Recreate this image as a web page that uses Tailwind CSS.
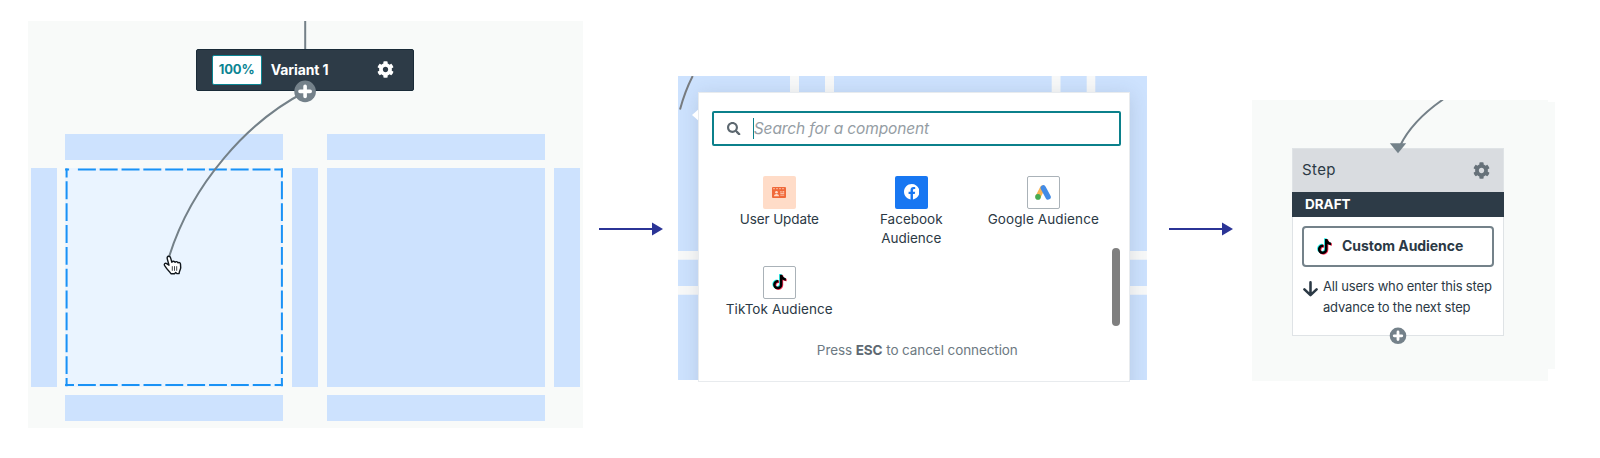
<!DOCTYPE html>
<html lang="en">
<head>
<meta charset="utf-8">
<title>Connect a component</title>
<script src="https://cdn.jsdelivr.net/npm/@tailwindcss/browser@4"></script>
</head>
<body class="bg-white font-['Inter',sans-serif] text-[#2b3945]">
<svg class="hidden">
  <symbol id="cog" viewBox="0 0 512 512"><path fill="currentColor" d="M487.4 315.7l-42.6-24.6c4.3-23.2 4.3-47 0-70.2l42.6-24.6c4.9-2.8 7.1-8.6 5.5-14-11.1-35.6-30-67.8-54.7-94.6-3.8-4.1-10-5.1-14.8-2.3L380.8 110c-17.9-15.4-38.5-27.3-60.8-35.1V25.8c0-5.6-3.9-10.5-9.4-11.7-36.7-8.2-74.3-7.8-109.2 0-5.5 1.2-9.4 6.1-9.4 11.7V75c-22.2 7.9-42.8 19.8-60.8 35.1L88.7 85.5c-4.9-2.8-11-1.9-14.8 2.3-24.7 26.7-43.6 58.9-54.7 94.6-1.7 5.4.6 11.2 5.5 14L67.3 221c-4.3 23.2-4.3 47 0 70.2l-42.6 24.6c-4.9 2.8-7.1 8.6-5.5 14 11.1 35.6 30 67.8 54.7 94.6 3.8 4.1 10 5.1 14.8 2.3l42.6-24.6c17.9 15.4 38.5 27.3 60.8 35.1v49.2c0 5.6 3.9 10.5 9.4 11.7 36.7 8.2 74.3 7.8 109.2 0 5.5-1.2 9.4-6.1 9.4-11.7v-49.2c22.2-7.9 42.8-19.8 60.8-35.1l42.6 24.6c4.9 2.8 11 1.9 14.8-2.3 24.7-26.7 43.6-58.9 54.7-94.6 1.5-5.5-.7-11.3-5.6-14.1zM256 336c-44.1 0-80-35.9-80-80s35.9-80 80-80 80 35.9 80 80-35.9 80-80 80z"/></symbol>
  <symbol id="note" viewBox="-30 -24 508 560">
    <path fill="#25f4ee" transform="translate(-28 -20)" d="M448,209.91a210.06,210.06,0,0,1-122.77-39.25V349.38A162.55,162.55,0,1,1,185,188.31V278.2a74.62,74.62,0,1,0,52.23,71.18V0l88,0a121.18,121.18,0,0,0,1.86,22.17h0A122.18,122.18,0,0,0,381,102.39a121.43,121.43,0,0,0,67,20.14Z"/>
    <path fill="#fe2c55" transform="translate(28 20)" d="M448,209.91a210.06,210.06,0,0,1-122.77-39.25V349.38A162.55,162.55,0,1,1,185,188.31V278.2a74.62,74.62,0,1,0,52.23,71.18V0l88,0a121.18,121.18,0,0,0,1.86,22.17h0A122.18,122.18,0,0,0,381,102.39a121.43,121.43,0,0,0,67,20.14Z"/>
    <path fill="#000" d="M448,209.91a210.06,210.06,0,0,1-122.77-39.25V349.38A162.55,162.55,0,1,1,185,188.31V278.2a74.62,74.62,0,1,0,52.23,71.18V0l88,0a121.18,121.18,0,0,0,1.86,22.17h0A122.18,122.18,0,0,0,381,102.39a121.43,121.43,0,0,0,67,20.14Z"/>
  </symbol>
  <symbol id="arrow" viewBox="0 0 64 14"><path d="M0 6.9H55" stroke="#2b3496" stroke-width="2"/><path d="M53 .5L64 7L53 13.5z" fill="#2b3496"/></symbol>
</svg>

<main class="flex h-[458px] w-[1600px] items-start overflow-hidden">

  <!-- Canvas with drop zones -->
  <section class="relative mt-[21px] ml-7 h-[406.5px] w-[555px] shrink-0 bg-[#f8faf9]">
    <div class="pt-[27.7px] pl-[168px]">
      <div class="flex h-[42.3px] w-[218px] items-center rounded-[2px] border border-[#1a2b38] bg-[#2d3b47] pr-[19px] pl-[14.7px]">
        <div class="flex h-[30px] w-[50px] items-center justify-center rounded-[2px] border border-[#0b8593] bg-white text-[13px] font-bold tracking-[-0.1px] text-[#0b8593]">100%</div>
        <span class="ml-[9px] text-[14px] font-bold tracking-[-0.1px] text-white">Variant 1</span>
        <svg class="ml-auto size-[17px] text-white"><use href="#cog"/></svg>
      </div>
    </div>
    <div class="ml-[2.5px] grid grid-cols-[26.3px_218px_26.3px_218px_26.3px] grid-rows-[25.7px_218.3px_26px] gap-[8.7px] pt-[43px]">
      <div class="col-start-2 bg-[#cde2fe]"></div>
      <div class="col-start-4 bg-[#cde2fe]"></div>
      <div class="col-start-1 row-start-2 bg-[#cde2fe]"></div>
      <div class="col-start-2 row-start-2 bg-[#eaf4ff]">
        <svg class="block h-full w-full" viewBox="0 0 218 218.5" fill="none" stroke="#1a92f5" stroke-width="2">
          <path d="M0 1.5H218" stroke-dasharray="4 8.8 18 3.8 18 3.9 18 3.8 18 3.9 18 3.8 18 3.9 18 3.8 18 3.9 18 3.8 9 99"/>
          <path d="M0 217.3H218" stroke-dasharray="17.9 3.97" stroke-dashoffset="9"/>
          <path d="M1.5 .5V218.5M217 .5V218.5" stroke-dasharray="17.9 3.97" stroke-dashoffset="9"/>
        </svg>
      </div>
      <div class="col-start-3 row-start-2 bg-[#cde2fe]"></div>
      <div class="col-start-4 row-start-2 bg-[#cde2fe]"></div>
      <div class="col-start-5 row-start-2 bg-[#cde2fe]"></div>
      <div class="col-start-2 row-start-3 bg-[#cde2fe]"></div>
      <div class="col-start-4 row-start-3 bg-[#cde2fe]"></div>
    </div>
    <!-- Connector, handle and pointer -->
    <svg class="absolute inset-0 h-full w-full" viewBox="28 21 555 406.5" fill="none">
      <path d="M305.2 21V49M305 92C248 121 192 184 169.3 256" stroke="#748088" stroke-width="2"/>
      <circle cx="305.1" cy="91.4" r="10.8" fill="#74818a"/>
      <path d="M305.1 86.3V96.5M300 91.4H310.2" stroke="#fff" stroke-width="3.6" stroke-linecap="round"/>
      <path d="M168 257.2c.7-1.5 2.8-1.2 3.3.4l1.4 4.6c.8-1.3 2.6-1.2 3.1.1.9-1.1 2.4-.8 2.9.5 1.1-.7 2.4 0 2.6 1.3l.2 3.6c0 1.5-1.4 3.2-1.6 5.8l-2.3.1-1.1-1-1.2 1.2h-3.5c-1.2-2.6-3.4-3.6-4.6-5.6l-1.9-2.8c-.8-1.6.9-2.8 2.2-1.8l2.3 1.6-1.8-6.6z" transform="translate(-.8 0)" fill="#fff" stroke="#10161c" stroke-width="1.4" stroke-linejoin="round"/>
      <path d="M172.3 266.2V270.8M174.5 266.2V270.8M176.7 266.2V270.8" stroke="#10161c" stroke-width=".8"/>
    </svg>
  </section>

  <svg class="mt-[222px] ml-[15.5px] h-[14px] w-16 shrink-0"><use href="#arrow"/></svg>

  <!-- Component picker -->
  <section class="relative mt-[76px] ml-[15.5px] h-[306px] w-[469px] shrink-0">
    <div class="relative h-[304px] overflow-hidden bg-[#cde2fe]">
      <svg class="block h-full w-full" viewBox="678 76 469 304" fill="none">
        <path fill="#f8f9f9" d="M790 76h9v18h-9zM825 76h9v18h-9zM1051.7 76h8.8v18h-8.8zM1086.7 76h8.6v18h-8.6zM678 251h469v8.7H678zM678 286h469v8.7H678z"/>
        <path d="M692.7 76Q685 91 680 109.5" stroke="#787c80" stroke-width="2"/>
      </svg>
      <div class="absolute top-4 left-[20.5px] h-[320px] w-[431px] shadow-[0_3px_18px_rgba(60,70,90,0.17)]"></div>
      <svg class="absolute top-8 left-[13.5px] h-[14px] w-[8px]" viewBox="0 0 8 14"><path d="M8 0L0 7L8 14z" fill="#fff"/></svg>
    </div>
    <div class="absolute top-[15.5px] left-[20.3px] h-[290px] w-[431.5px] border border-[#e8ebee] bg-white">
      <div class="mt-[18.5px] ml-[12.5px] flex h-[35px] w-[409.5px] items-center rounded-[2px] border-2 border-[#0b808b] pl-[13.5px]">
        <svg class="size-[13.5px] text-[#5c676f]" viewBox="0 0 512 512"><path fill="currentColor" d="M505 442.7L405.3 343c-4.5-4.5-10.6-7-17-7H372c27.6-35.3 44-79.7 44-128C416 93.1 322.9 0 208 0S0 93.1 0 208s93.1 208 208 208c48.3 0 92.7-16.4 128-44v16.3c0 6.4 2.5 12.5 7 17l99.7 99.7c9.4 9.4 24.6 9.4 33.9 0l28.3-28.3c9.4-9.4 9.4-24.6.1-34zM208 336c-70.7 0-128-57.2-128-128 0-70.7 57.2-128 128-128 70.7 0 128 57.2 128 128 0 70.7-57.2 128-128 128z"/></svg>
        <div class="ml-3 h-[21px] w-px bg-[#0b808b]"></div>
        <span class="pt-[1px] text-[15.5px] tracking-[-0.12px] text-[#959da4] italic">Search for a component</span>
      </div>
      <div class="mt-[29.5px] ml-[14px] grid w-[396px] grid-cols-3 auto-rows-[90px] text-center text-[13.5px] leading-[20px]">
        <div class="flex flex-col items-center">
          <div class="flex size-[33px] items-center justify-center rounded-[2px] bg-[#ffdcc8]">
            <svg class="h-[11px] w-[14px]" viewBox="0 0 14 11"><rect width="14" height="11" rx="1" fill="#f0693a"/><path d="M1 1.7H13" stroke="#ffdcc8" stroke-width=".7" stroke-dasharray="2 1"/><circle cx="4.5" cy="5.2" r="1.3" fill="#ffdcc8"/><path d="M2 9.2c0-3 5-3 5 0zM8.3 4.3h1.3v1.2H8.3zM10.5 4.3h1.7v1.2h-1.7zM8.3 6.2h3.9v.8H8.3zM8.3 7.8h3.9v.8H8.3z" fill="#ffdcc8"/></svg>
          </div>
          <span class="tracking-[-0.1px]">User Update</span>
        </div>
        <div class="flex flex-col items-center">
          <div class="flex size-[33px] items-center justify-center rounded-[2px] bg-[#1877f2]">
            <svg class="size-[15.5px]" viewBox="8 8 496 496"><path fill="#fff" d="M504 256C504 119 393 8 256 8S8 119 8 256c0 123.78 90.69 226.38 209.25 245V327.69h-63V256h63v-54.64c0-62.15 37-96.48 93.67-96.48 27.14 0 55.52 4.84 55.52 4.84v61h-31.28c-30.8 0-40.41 19.12-40.41 38.73V256h68.78l-11 71.69h-57.78V501C413.31 482.38 504 379.78 504 256z"/></svg>
          </div>
          <span>Facebook</span><span class="-mt-[0.8px]">Audience</span>
        </div>
        <div class="flex flex-col items-center">
          <div class="flex size-[33px] items-center justify-center rounded-[2px] border border-[#aab2b8] bg-white">
            <svg class="h-[15px] w-4" viewBox="0 0 16 15"><path d="M7.6 3L3.1 11.6" stroke="#fbb555" stroke-width="5.2" stroke-linecap="round"/><path d="M8.3 2.9L13.1 11.9" stroke="#438be6" stroke-width="5.4" stroke-linecap="round"/><circle cx="3" cy="11.9" r="2.8" fill="#45ac53"/></svg>
          </div>
          <span class="tracking-[0.1px]">Google Audience</span>
        </div>
        <div class="flex flex-col items-center">
          <div class="flex size-[33px] items-center justify-center rounded-[2px] border border-[#aab2b8] bg-white">
            <svg class="h-[16px] w-[15px]"><use href="#note"/></svg>
          </div>
          <span class="tracking-[0.08px]">TikTok Audience</span>
        </div>
      </div>
      <div class="mt-[-15.2px] pl-[6.5px] text-center text-[13.5px] leading-[20px] tracking-[-0.09px] text-[#6d7982]">Press <b class="font-bold text-[#5d6871]">ESC</b> to cancel connection</div>
      <div class="absolute top-[155px] left-[412.5px] h-[78px] w-2 rounded-full bg-[#7f7f7f]"></div>
    </div>
  </section>

  <svg class="mt-[222px] ml-[21.5px] h-[14px] w-16 shrink-0"><use href="#arrow"/></svg>

  <!-- Resulting step -->
  <section class="relative mt-[100px] ml-[19.5px] h-[281px] w-[296px] shrink-0 bg-[#f8faf9]">
    <div class="absolute top-[2px] left-full h-[267px] w-[7px] bg-[#f8faf9]"></div>
    <div class="pt-[48.3px] pl-10">
      <div class="h-[187.5px] w-[211.5px] border border-[#dfe3e6] bg-white">
        <div class="flex h-[42.7px] items-center justify-between bg-[#d9dce0] pr-[12.5px] pl-[9px]">
          <span class="text-[15px] tracking-[0.4px]">Step</span>
          <svg class="size-[17px] text-[#667179]"><use href="#cog"/></svg>
        </div>
        <div class="-mx-px flex h-[25.3px] items-center bg-[#2d3b47] pb-px pl-[13px] text-[13.5px] font-bold text-white">DRAFT</div>
        <div class="mt-[8.3px] ml-[9px] flex h-[41.5px] w-[192px] items-center rounded-[4px] border-2 border-[#74828a] pl-[12.5px]">
          <svg class="h-[17px] w-[15px]"><use href="#note"/></svg>
          <span class="ml-[10.5px] pb-[2px] text-[14px] font-bold tracking-[-0.05px]">Custom Audience</span>
        </div>
        <div class="mt-[9px] flex pl-[10px]">
          <svg class="mt-[4.5px] h-[16px] w-[15px] shrink-0" viewBox="0 0 14 15" fill="none" stroke="#2b3945" stroke-width="2.4" stroke-linecap="round" stroke-linejoin="round"><path d="M7 1.3V13M1.3 7.8L7 13.3L12.7 7.8"/></svg>
          <p class="ml-[5px] text-[13px] leading-[21px] tracking-[-0.18px] whitespace-nowrap">All users who enter this step<br>advance to the next step</p>
        </div>
      </div>
    </div>
    <svg class="absolute inset-0 h-full w-full" viewBox="1252 100 296 281" fill="none">
      <path d="M1443 99.5Q1412 121 1400 146" stroke="#748088" stroke-width="2"/>
      <path d="M1389.8 143.2H1406.2L1398 153.3z" fill="#74828a"/>
      <circle cx="1398" cy="335.8" r="8.3" fill="#74818a"/>
      <path d="M1398 332V339.6M1394.2 335.8H1401.8" stroke="#fff" stroke-width="2.8" stroke-linecap="round"/>
    </svg>
  </section>
</main>
</body>
</html>
